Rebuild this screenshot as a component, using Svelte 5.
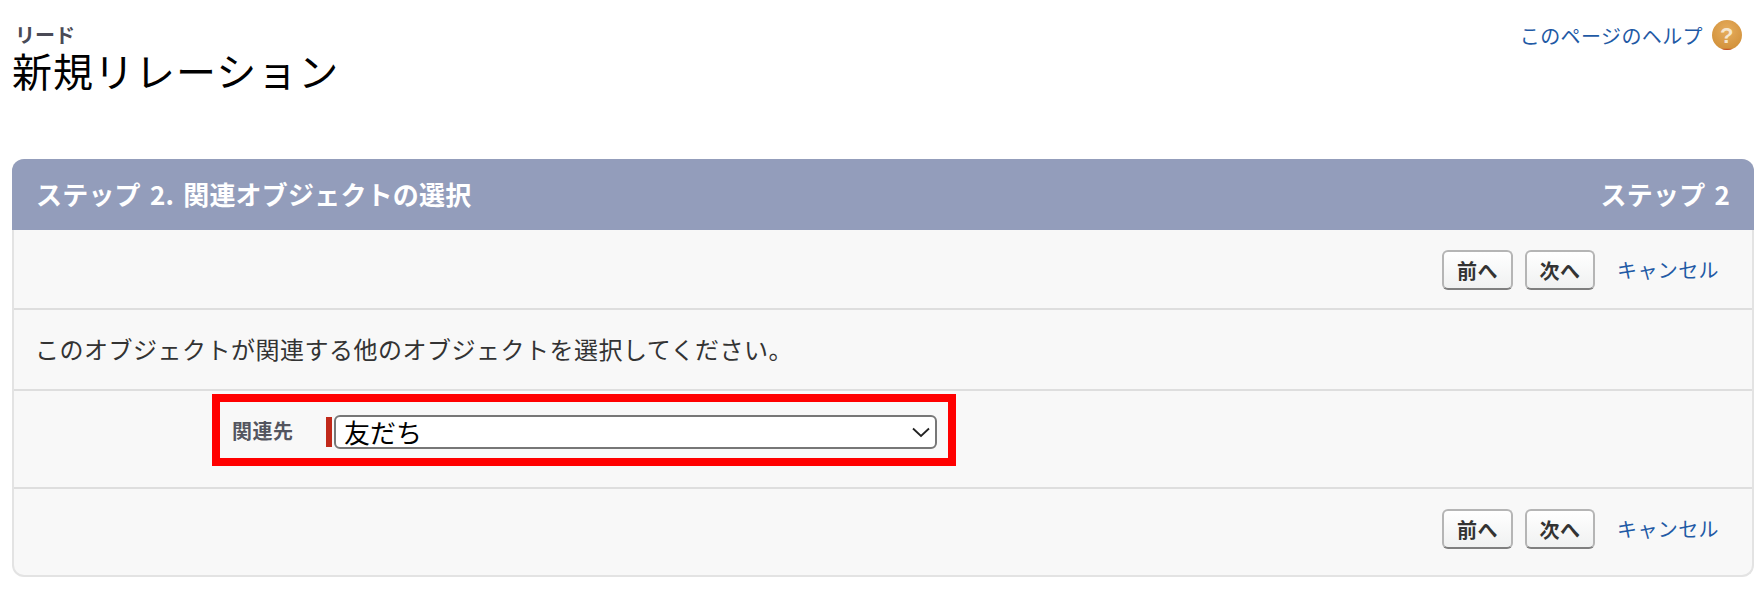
<script lang="ts">
  let relatedTo = $state("友だち");
  const options = ["友だち", "取引先", "商談"];
</script>

{#snippet actions()}
  <div class="actions">
    <button type="button" class="btn">前へ</button>
    <button type="button" class="btn">次へ</button>
    <a href="#cancel" class="link cancel">キャンセル</a>
  </div>
{/snippet}

<div class="page">
  <!-- Page title -->
  <header class="page-head">
    <div>
      <div class="object-name">リード</div>
      <h1>新規リレーション</h1>
    </div>
    <div class="help">
      <a href="#help" class="link">このページのヘルプ</a>
      <svg width="30" height="30" viewBox="0 0 30 30" aria-hidden="true">
        <defs>
          <radialGradient id="coin" cx="50%" cy="35%" r="70%">
            <stop offset="0%" stop-color="#e6ad5e" />
            <stop offset="100%" stop-color="#d08f38" />
          </radialGradient>
        </defs>
        <circle cx="15" cy="15" r="15" fill="url(#coin)" />
        <path d="M9 28.7a15 15 0 0 0 12 0z" fill="#c4552a" />
        <text x="15" y="23" text-anchor="middle" class="qmark">?</text>
      </svg>
    </div>
  </header>

  <section class="panel">
    <div class="panel-title">
      <h2>ステップ 2. 関連オブジェクトの選択</h2>
      <span>ステップ 2</span>
    </div>

    <div class="row">{@render actions()}</div>

    <div class="row intro">このオブジェクトが関連する他のオブジェクトを選択してください。</div>

    <!-- Related object -->
    <div class="row field-row">
      <div class="highlight">
        <label for="related">関連先</label>
        <div class="required"></div>
        <div class="select-wrapper">
          <select id="related" bind:value={relatedTo}>
            {#each options as option}
              <option value={option}>{option}</option>
            {/each}
          </select>
          <svg class="chevron" width="18" height="11" viewBox="0 0 18 11" aria-hidden="true">
            <path d="M1 1.5l8 7.5 8-7.5" fill="none" stroke="#222" stroke-width="1.8" />
          </svg>
        </div>
      </div>
    </div>

    <div class="row last">{@render actions()}</div>
  </section>
</div>

<style>
  :global(body) {
    background: #fff;
  }
  .page {
    width: 1764px;
    height: 592px;
    overflow: hidden;
    box-sizing: border-box;
    padding: 0 10px 0 12px;
    font-family: "Noto Sans CJK JP", "Noto Sans", sans-serif;
    color: #333;
  }
  .page-head {
    height: 159px;
    display: flex;
    justify-content: space-between;
    align-items: flex-start;
  }
  .object-name {
    margin: 24px 0 0 3px;
    font-size: 20px;
    line-height: 22px;
    font-weight: 700;
    color: #4a4a56;
  }
  h1 {
    margin: 0;
    font-size: 40px;
    line-height: 48px;
    letter-spacing: 1px;
    font-weight: 400;
    color: #000;
  }
  .help {
    margin: 20px 12px 0 0;
    display: flex;
    align-items: center;
    gap: 9px;
    font-size: 20px;
    letter-spacing: 0.4px;
  }
  .qmark {
    font-family: "Liberation Sans", sans-serif;
    font-size: 22px;
    font-weight: 700;
    fill: #f6e7cf;
  }
  .link {
    color: #1f5aa5;
    text-decoration: none;
  }
  .panel {
    height: 418px;
    box-sizing: border-box;
    background: #f8f8f8;
    border: 2px solid #e3e3e3;
    border-top: 0;
    border-radius: 12px;
    display: flex;
    flex-direction: column;
  }
  .panel-title {
    margin: 0 -2px;
    height: 71px;
    box-sizing: border-box;
    flex: none;
    padding: 0 24px 3px 24px;
    background: #939dbb;
    border-radius: 12px 12px 0 0;
    display: flex;
    align-items: center;
    justify-content: space-between;
    color: #fff;
    font-size: 26px;
    letter-spacing: 0.2px;
    word-spacing: 3px;
    font-weight: 700;
  }
  h2 {
    margin: 0;
    font-size: inherit;
    font-weight: inherit;
  }
  .row {
    box-sizing: border-box;
    border-bottom: 2px solid #dedede;
  }
  .row:nth-child(2) {
    height: 80px;
  }
  .intro {
    height: 81px;
    padding: 22px 0 0 21px;
    font-size: 24px;
    line-height: 34px;
    letter-spacing: 0.5px;
  }
  .field-row {
    height: 98px;
    padding: 3px 0 0 198px;
  }
  .last {
    border-bottom: 0;
    flex: 1;
  }
  .actions {
    height: 100%;
    box-sizing: border-box;
    padding: 20px 33px 0 0;
    display: flex;
    justify-content: flex-end;
    align-items: flex-start;
    gap: 12px;
  }
  .btn {
    width: 71px;
    height: 40px;
    padding: 0;
    background: linear-gradient(#fff, #f0f1f1);
    border: 2px solid #b5b5b5;
    border-bottom-color: #7f7f7f;
    border-radius: 6px;
    font: 700 20px "Noto Sans CJK JP", sans-serif;
    letter-spacing: 0.5px;
    color: #333;
  }
  .btn + .btn {
    width: 70px;
  }
  .cancel {
    margin-left: 10px;
    font-size: 20px;
    line-height: 40px;
    letter-spacing: 0.4px;
  }
  .highlight {
    width: 744px;
    height: 72px;
    box-sizing: border-box;
    border: 8px solid #f00;
    display: flex;
    align-items: center;
    padding-left: 12px;
  }
  label {
    width: 94px;
    font-size: 20px;
    letter-spacing: 0.5px;
    font-weight: 700;
    color: #54555f;
  }
  .required {
    width: 6px;
    height: 30px;
    margin: 4px 2px 0 0;
    background: #c1291a;
  }
  .select-wrapper {
    position: relative;
    width: 603px;
    height: 34px;
    margin-top: 4px;
  }
  select {
    appearance: none;
    width: 100%;
    height: 100%;
    box-sizing: border-box;
    padding: 0 0 0 8px;
    background: #fff;
    border: 2px solid #777;
    border-radius: 6px;
    font: 400 26px/30px "Noto Sans CJK JP", sans-serif;
    color: #000;
  }
  .chevron {
    position: absolute;
    right: 7px;
    top: 12px;
    pointer-events: none;
  }
</style>
